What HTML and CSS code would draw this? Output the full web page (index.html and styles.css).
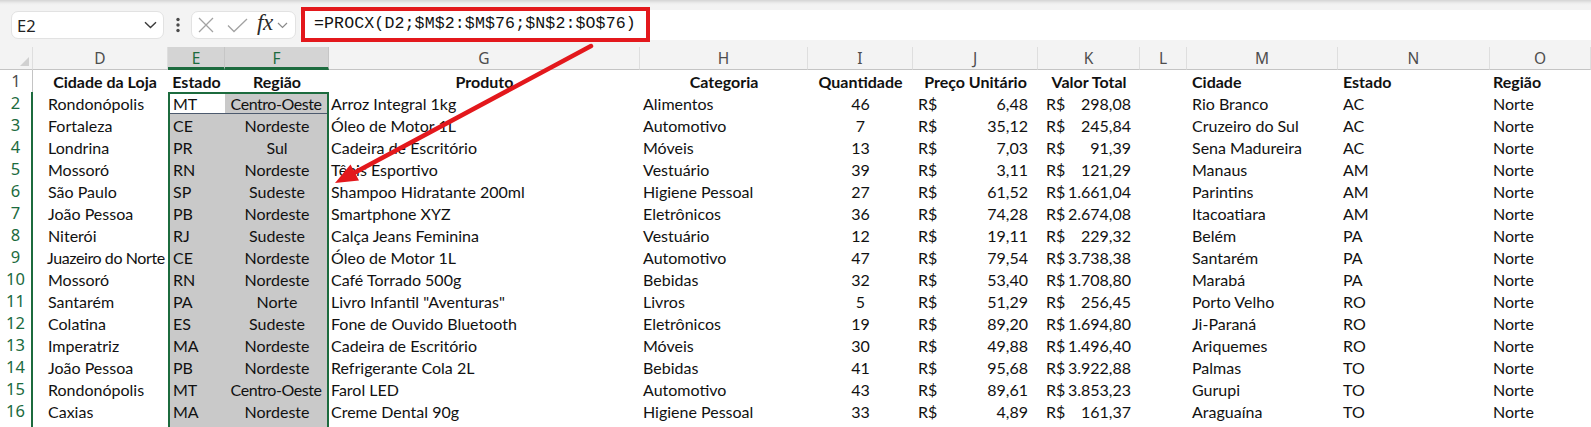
FILE: index.html
```html
<!DOCTYPE html>
<html lang="pt-BR">
<head>
<meta charset="utf-8">
<title>PROCX</title>
<link rel="stylesheet" href="styles.css">
</head>
<body>
<div class="app">
  <div class="fbar">
    <div class="namebox"><span class="nb-text">E2</span>
      <svg class="chev" width="13" height="8" viewBox="0 0 13 8"><path d="M1 1.2 L6.5 6.5 L12 1.2" fill="none" stroke="#3a3a3a" stroke-width="1.4"/></svg>
    </div>
    <div class="dots">
      <svg width="6" height="16" viewBox="0 0 6 16"><circle cx="3" cy="2.5" r="1.7" fill="#4a4a4a"/><circle cx="3" cy="8" r="1.7" fill="#4a4a4a"/><circle cx="3" cy="13.5" r="1.7" fill="#4a4a4a"/></svg>
    </div>
    <div class="fxbox">
      <svg class="ico-x" width="16" height="16" viewBox="0 0 16 16"><path d="M1 1 L15 15 M15 1 L1 15" stroke="#a3a3a3" stroke-width="1.3" fill="none"/></svg>
      <svg class="ico-ok" width="21" height="15" viewBox="0 0 21 15"><path d="M1 7.5 L7 13.5 L20 1" stroke="#a3a3a3" stroke-width="1.3" fill="none"/></svg>
      <span class="fx">fx</span>
      <svg class="chev2" width="11" height="7" viewBox="0 0 11 7"><path d="M1 1 L5.5 5.5 L10 1" fill="none" stroke="#8a8a8a" stroke-width="1.2"/></svg>
    </div>
    <div class="finput">
      <div class="formula">=PROCX(D2;$M$2:$M$76;$N$2:$O$76)</div>
    </div>
  </div>

  <div class="sheet">
    <div class="h corner"><span class="tri"></span></div>
    <div class="h">D</div><div class="h hs">E</div><div class="h hs">F</div><div class="h">G</div><div class="h">H</div><div class="h">I</div><div class="h">J</div><div class="h">K</div><div class="h">L</div><div class="h">M</div><div class="h">N</div><div class="h">O</div>

    <div class="rh">1</div>
    <div class="c b hd-d">Cidade da Loja</div><div class="c b ctr">Estado</div><div class="c b ctr">Região</div><div class="c b ctr">Produto</div><div class="c b ctr">Categoria</div><div class="c b ctr">Quantidade</div><div class="c b ctr">Preço Unitário</div><div class="c b ctr">Valor Total</div><div class="c"></div><div class="c b pm">Cidade</div><div class="c b pn">Estado</div><div class="c b po">Região</div>

    <div class="rh s">2</div>
    <div class="c pd">Rondonópolis</div><div class="c e act top">MT</div><div class="c f ctr top tight">Centro-Oeste</div><div class="c pg">Arroz Integral 1kg</div><div class="c ph">Alimentos</div><div class="c ctr">46</div><div class="c cur cj"><span>R$</span><span>6,48</span></div><div class="c cur ck"><span>R$</span><span>298,08</span></div><div class="c"></div><div class="c pm">Rio Branco</div><div class="c pn">AC</div><div class="c po">Norte</div>

    <div class="rh s">3</div>
    <div class="c pd">Fortaleza</div><div class="c e">CE</div><div class="c f ctr">Nordeste</div><div class="c pg">Óleo de Motor 1L</div><div class="c ph">Automotivo</div><div class="c ctr">7</div><div class="c cur cj"><span>R$</span><span>35,12</span></div><div class="c cur ck"><span>R$</span><span>245,84</span></div><div class="c"></div><div class="c pm">Cruzeiro do Sul</div><div class="c pn">AC</div><div class="c po">Norte</div>

    <div class="rh s">4</div>
    <div class="c pd">Londrina</div><div class="c e">PR</div><div class="c f ctr">Sul</div><div class="c pg">Cadeira de Escritório</div><div class="c ph">Móveis</div><div class="c ctr">13</div><div class="c cur cj"><span>R$</span><span>7,03</span></div><div class="c cur ck"><span>R$</span><span>91,39</span></div><div class="c"></div><div class="c pm">Sena Madureira</div><div class="c pn">AC</div><div class="c po">Norte</div>

    <div class="rh s">5</div>
    <div class="c pd">Mossoró</div><div class="c e">RN</div><div class="c f ctr">Nordeste</div><div class="c pg">Tênis Esportivo</div><div class="c ph">Vestuário</div><div class="c ctr">39</div><div class="c cur cj"><span>R$</span><span>3,11</span></div><div class="c cur ck"><span>R$</span><span>121,29</span></div><div class="c"></div><div class="c pm">Manaus</div><div class="c pn">AM</div><div class="c po">Norte</div>

    <div class="rh s">6</div>
    <div class="c pd">São Paulo</div><div class="c e">SP</div><div class="c f ctr">Sudeste</div><div class="c pg">Shampoo Hidratante 200ml</div><div class="c ph">Higiene Pessoal</div><div class="c ctr">27</div><div class="c cur cj"><span>R$</span><span>61,52</span></div><div class="c cur ck"><span>R$</span><span>1.661,04</span></div><div class="c"></div><div class="c pm">Parintins</div><div class="c pn">AM</div><div class="c po">Norte</div>

    <div class="rh s">7</div>
    <div class="c pd">João Pessoa</div><div class="c e">PB</div><div class="c f ctr">Nordeste</div><div class="c pg">Smartphone XYZ</div><div class="c ph">Eletrônicos</div><div class="c ctr">36</div><div class="c cur cj"><span>R$</span><span>74,28</span></div><div class="c cur ck"><span>R$</span><span>2.674,08</span></div><div class="c"></div><div class="c pm">Itacoatiara</div><div class="c pn">AM</div><div class="c po">Norte</div>

    <div class="rh s">8</div>
    <div class="c pd">Niterói</div><div class="c e">RJ</div><div class="c f ctr">Sudeste</div><div class="c pg">Calça Jeans Feminina</div><div class="c ph">Vestuário</div><div class="c ctr">12</div><div class="c cur cj"><span>R$</span><span>19,11</span></div><div class="c cur ck"><span>R$</span><span>229,32</span></div><div class="c"></div><div class="c pm">Belém</div><div class="c pn">PA</div><div class="c po">Norte</div>

    <div class="rh s">9</div>
    <div class="c pd tight2">Juazeiro do Norte</div><div class="c e">CE</div><div class="c f ctr">Nordeste</div><div class="c pg">Óleo de Motor 1L</div><div class="c ph">Automotivo</div><div class="c ctr">47</div><div class="c cur cj"><span>R$</span><span>79,54</span></div><div class="c cur ck"><span>R$</span><span>3.738,38</span></div><div class="c"></div><div class="c pm">Santarém</div><div class="c pn">PA</div><div class="c po">Norte</div>

    <div class="rh s">10</div>
    <div class="c pd">Mossoró</div><div class="c e">RN</div><div class="c f ctr">Nordeste</div><div class="c pg">Café Torrado 500g</div><div class="c ph">Bebidas</div><div class="c ctr">32</div><div class="c cur cj"><span>R$</span><span>53,40</span></div><div class="c cur ck"><span>R$</span><span>1.708,80</span></div><div class="c"></div><div class="c pm">Marabá</div><div class="c pn">PA</div><div class="c po">Norte</div>

    <div class="rh s">11</div>
    <div class="c pd">Santarém</div><div class="c e">PA</div><div class="c f ctr">Norte</div><div class="c pg">Livro Infantil "Aventuras"</div><div class="c ph">Livros</div><div class="c ctr">5</div><div class="c cur cj"><span>R$</span><span>51,29</span></div><div class="c cur ck"><span>R$</span><span>256,45</span></div><div class="c"></div><div class="c pm">Porto Velho</div><div class="c pn">RO</div><div class="c po">Norte</div>

    <div class="rh s">12</div>
    <div class="c pd">Colatina</div><div class="c e">ES</div><div class="c f ctr">Sudeste</div><div class="c pg">Fone de Ouvido Bluetooth</div><div class="c ph">Eletrônicos</div><div class="c ctr">19</div><div class="c cur cj"><span>R$</span><span>89,20</span></div><div class="c cur ck"><span>R$</span><span>1.694,80</span></div><div class="c"></div><div class="c pm">Ji-Paraná</div><div class="c pn">RO</div><div class="c po">Norte</div>

    <div class="rh s">13</div>
    <div class="c pd">Imperatriz</div><div class="c e">MA</div><div class="c f ctr">Nordeste</div><div class="c pg">Cadeira de Escritório</div><div class="c ph">Móveis</div><div class="c ctr">30</div><div class="c cur cj"><span>R$</span><span>49,88</span></div><div class="c cur ck"><span>R$</span><span>1.496,40</span></div><div class="c"></div><div class="c pm">Ariquemes</div><div class="c pn">RO</div><div class="c po">Norte</div>

    <div class="rh s">14</div>
    <div class="c pd">João Pessoa</div><div class="c e">PB</div><div class="c f ctr">Nordeste</div><div class="c pg">Refrigerante Cola 2L</div><div class="c ph">Bebidas</div><div class="c ctr">41</div><div class="c cur cj"><span>R$</span><span>95,68</span></div><div class="c cur ck"><span>R$</span><span>3.922,88</span></div><div class="c"></div><div class="c pm">Palmas</div><div class="c pn">TO</div><div class="c po">Norte</div>

    <div class="rh s">15</div>
    <div class="c pd">Rondonópolis</div><div class="c e">MT</div><div class="c f ctr tight">Centro-Oeste</div><div class="c pg">Farol LED</div><div class="c ph">Automotivo</div><div class="c ctr">43</div><div class="c cur cj"><span>R$</span><span>89,61</span></div><div class="c cur ck"><span>R$</span><span>3.853,23</span></div><div class="c"></div><div class="c pm">Gurupi</div><div class="c pn">TO</div><div class="c po">Norte</div>

    <div class="rh s">16</div>
    <div class="c pd">Caxias</div><div class="c e">MA</div><div class="c f ctr">Nordeste</div><div class="c pg">Creme Dental 90g</div><div class="c ph">Higiene Pessoal</div><div class="c ctr">33</div><div class="c cur cj"><span>R$</span><span>4,89</span></div><div class="c cur ck"><span>R$</span><span>161,37</span></div><div class="c"></div><div class="c pm">Araguaína</div><div class="c pn">TO</div><div class="c po">Norte</div>

    <div class="rh s"></div>
    <div class="c"></div><div class="c e"></div><div class="c f"></div><div class="c"></div><div class="c"></div><div class="c"></div><div class="c"></div><div class="c"></div><div class="c"></div><div class="c"></div><div class="c"></div><div class="c"></div>
  </div>

  <svg class="arrow" width="1591" height="427" viewBox="0 0 1591 427">
    <line x1="591" y1="46" x2="353" y2="173.5" stroke="#e3181c" stroke-width="4.5" stroke-linecap="round"/>
    <polygon points="335,183 359,180.5 350.5,164.5" fill="#e3181c"/>
  </svg>
</div>
</body>
</html>
```

FILE: styles.css
```css
* { box-sizing: border-box; }

body {
  margin: 0;
  background: #ffffff;
  font-family: Lato, "Liberation Sans", sans-serif;
  color: #111;
  overflow: hidden;
}

.app {
  position: relative;
  width: 1591px;
  height: 427px;
  overflow: hidden;
}

/* ---------- formula bar ---------- */
.fbar {
  height: 47px;
  background: linear-gradient(#d4d4d4 0, #ececec 3px, #f3f3f3 5px, #f3f3f3 100%);
  display: flex;
  align-items: flex-start;
  padding: 11px 0 0 11px;
}

.namebox {
  width: 153px;
  height: 28px;
  background: #fff;
  border: 1px solid #e2e2e2;
  border-radius: 7px;
  display: flex;
  align-items: center;
  justify-content: space-between;
  padding: 0 6px 0 5px;
  font-family: "Noto Sans", "Open Sans", sans-serif;
  font-size: 16.5px;
  color: #222;
}

.dots {
  width: 27px;
  height: 28px;
  display: flex;
  align-items: center;
  justify-content: center;
}

.fxbox {
  width: 105px;
  height: 28px;
  background: #fff;
  border: 1px solid #e2e2e2;
  border-radius: 7px;
  display: flex;
  align-items: center;
  padding-left: 6px;
}

.ico-x { margin-right: 13px; }
.ico-ok { margin-right: 9px; }

.fx {
  font-family: "Liberation Serif", serif;
  font-style: italic;
  font-size: 23px;
  color: #2a2a2a;
  line-height: 20px;
  margin-right: 4px;
  margin-top: -4px;
  letter-spacing: -0.5px;
}

.finput {
  flex: 1;
  height: 30px;
  margin-top: -1px;
  margin-left: 4px;
  background: #fff;
  border-radius: 7px 0 0 7px;
}

.formula {
  width: 349px;
  height: 35px;
  margin-top: -3px;
  margin-left: 1px;
  border: 4px solid #e3181c;
  padding-left: 9px;
  font-family: "Liberation Mono", "DejaVu Sans Mono", monospace;
  font-size: 16.6px;
  letter-spacing: 0.1px;
  line-height: 26px;
  color: #111;
  white-space: nowrap;
}

/* ---------- sheet ---------- */
.sheet {
  display: grid;
  grid-template-columns: 33px 135px 57px 104px 311px 168px 105px 125px 102px 47px 151px 152px 101px;
  grid-template-rows: 23px;
  grid-auto-rows: 22px;
  background: #fff;
}

.h {
  background: #f3f3f3;
  border-bottom: 1px solid #c4c4c4;
  border-right: 1px solid #dedede;
  text-align: center;
  font-family: "Noto Sans", "Open Sans", sans-serif;
  font-size: 15.5px;
  line-height: 22px;
  color: #4d4d4d;
}

.h.hs {
  background: #d4d4d4;
  color: #1c6b3e;
  border-bottom: 3px solid #1c6b3e;
  border-right-color: #c6c6c6;
}

.corner {
  position: relative;
}

.tri {
  position: absolute;
  right: 3px;
  bottom: 3px;
  width: 0;
  height: 0;
  border-left: 9px solid transparent;
  border-bottom: 9px solid #d0d0d0;
}

.rh {
  background: #ffffff;
  border-right: 1px solid #c4c4c4;
  text-align: center;
  font-family: "Noto Sans", "Open Sans", sans-serif;
  font-size: 16.5px;
  line-height: 22px;
  color: #4d4d4d;
}

.rh.s {
  color: #1c6b3e;
  border-right: 2px solid #1c6b3e;
}

.c {
  font-size: 16px;
  line-height: 23px;
  white-space: nowrap;
  overflow: hidden;
  padding: 0 3px;
  color: #111;
}

.b { font-weight: bold; }
.ctr { text-align: center; }
.hd-d { text-align: center; padding-left: 12px; }
.tight { letter-spacing: -0.45px; padding: 0 2px 0 0; }

.pd { padding-left: 15px; }
.pd.tight2 { letter-spacing: -0.4px; padding-left: 14px; padding-right: 0; }
.pg { padding-left: 2px; }
.ph { padding-left: 3px; }
.pm { padding-left: 5px; }
.pn { padding-left: 5px; }
.po { padding-left: 3px; }

.cur {
  display: flex;
  justify-content: space-between;
}
.cj { padding: 0 10px 0 5px; }
.ck { padding: 0 9px 0 8px; }

/* selection E2:F76 */
.e {
  background: #c9c9c9;
  padding-left: 5px;
  box-shadow: inset 2px 0 0 #1c6b3e;
}
.f {
  background: #c9c9c9;
  box-shadow: inset -2px 0 0 #1c6b3e;
}
.e.act {
  background: #fff;
}
.e.top {
  box-shadow: inset 2px 0 0 #1c6b3e, inset 0 2px 0 #1c6b3e, inset 0 -1px 0 #4c5a6e;
}
.f.top {
  box-shadow: inset -2px 0 0 #1c6b3e, inset 0 2px 0 #1c6b3e, inset 0 -1px 0 #4c5a6e;
}

/* annotation arrow */
.arrow {
  position: absolute;
  left: 0;
  top: 0;
  pointer-events: none;
}
```
